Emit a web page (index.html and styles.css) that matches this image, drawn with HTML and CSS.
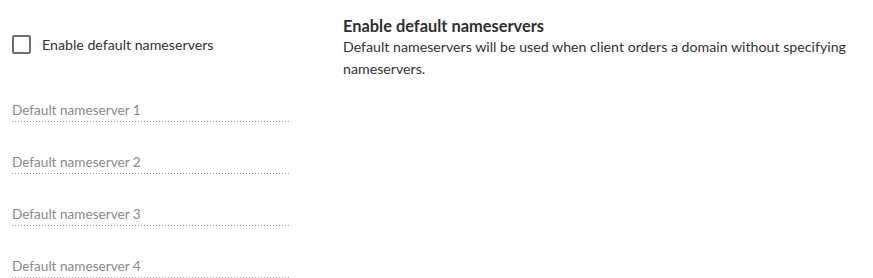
FILE: index.html
```html
<!DOCTYPE html>
<html lang="en">

<head>
  <meta charset="UTF-8">
  <meta name="viewport" content="width=device-width, initial-scale=1.0">
  <title>Nameservers</title>
  <link rel="stylesheet" href="styles.css">
</head>

<body>
  <div class="settings">
    <div class="fields">
      <label class="check">
        <span class="box"></span>
        <span class="check_label">Enable default nameservers</span>
      </label>
      <div class="field">Default nameserver 1</div>
      <div class="field">Default nameserver 2</div>
      <div class="field">Default nameserver 3</div>
      <div class="field">Default nameserver 4</div>
    </div>
    <div class="help">
      <div class="help_title">Enable default nameservers</div>
      <div class="help_text">Default nameservers will be used when client orders a domain without specifying nameservers.</div>
    </div>
  </div>
</body>

</html>
```

FILE: styles.css
```css
body {
  margin: 0;
  font-family: 'Lato', 'Open Sans', sans-serif;
  color: #333;
  background: #fff;
}

.settings {
  display: flex;
  padding: 16px 12px 0 12px;
  gap: 54px;
}

/* 左邊 */
.fields {
  width: 277px;
  flex-shrink: 0;
  display: flex;
  flex-direction: column;
}

.check {
  display: flex;
  align-items: center;
  height: 24px;
  margin-top: 16px;
  font-size: 14.2px;
  color: #333;
}

.box {
  width: 15px;
  height: 15px;
  border: 2px solid #6d6d6d;
  border-radius: 2px;
  margin-right: 11px;
}

.field {
  box-sizing: border-box;
  margin-top: 28px;
  height: 24px;
  padding-top: 3px;
  line-height: 18px;
  font-size: 13.6px;
  color: #8a8a8a;
  background-image: linear-gradient(to right, #9a9a9a 1px, transparent 1px);
  background-size: 3px 1px;
  background-repeat: repeat-x;
  background-position: left bottom;
}

.fields .check + .field {
  margin-top: 42px;
}

/* 右邊 */
.help {
  width: 520px;
}

.help_title {
  font-size: 16.4px;
  font-weight: bold;
  line-height: 20px;
  color: #2f2f2f;
}

.help_text {
  font-size: 14.2px;
  line-height: 22px;
  color: #333;
}
```
